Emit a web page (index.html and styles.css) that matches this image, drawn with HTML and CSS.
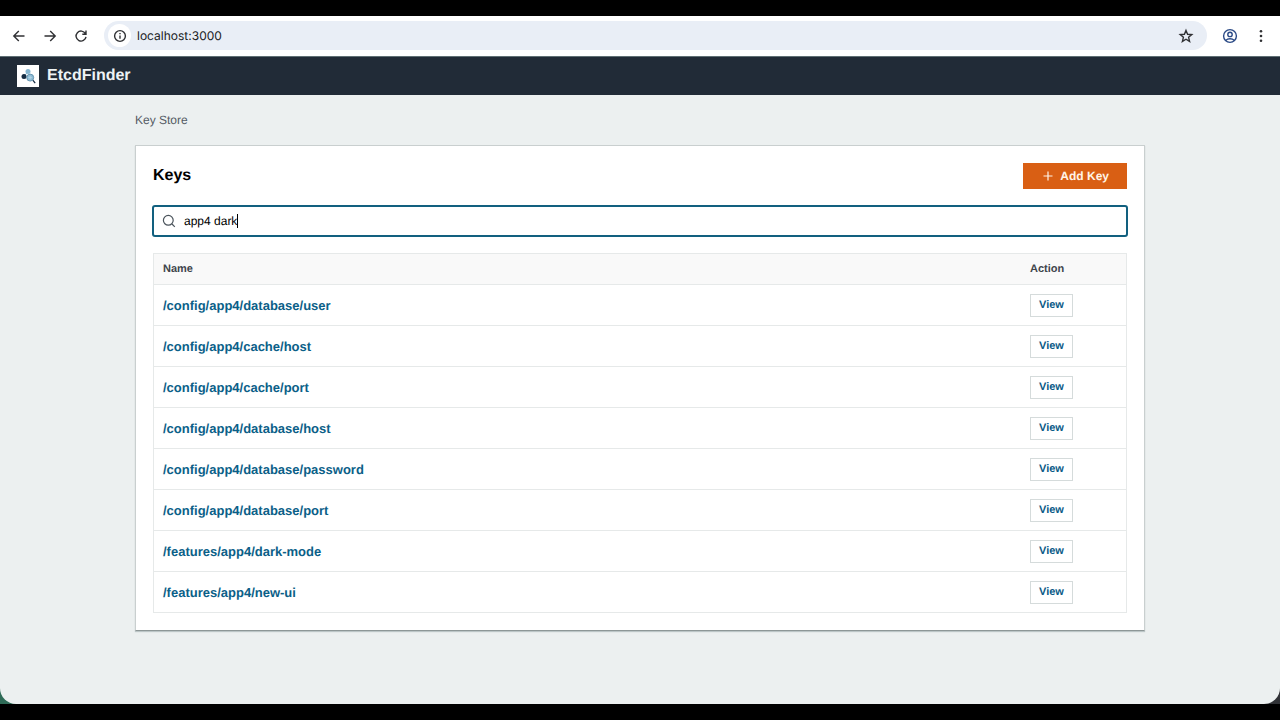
FILE: index.html
```
<!DOCTYPE html>
<html lang="en">
<head>
    <meta charset="UTF-8">
    <meta name="viewport" content="width=device-width, initial-scale=1.0">
    <title>EtcdFinder</title>
    <link rel="stylesheet" href="styles.css">
</head>
<body>

<div class="window">
    <!-- Browser Toolbar -->
    <div class="toolbar">
        <button class="tool-button" aria-label="Back">
            <svg width="16" height="16" viewBox="0 0 16 16"><path d="M13.500 8H3M7.800 3L2.800 8l5 5"/></svg>
        </button>
        <button class="tool-button" aria-label="Forward">
            <svg width="16" height="16" viewBox="0 0 16 16"><path d="M2.500 8H13M8.200 3l5 5-5 5"/></svg>
        </button>
        <button class="tool-button" aria-label="Reload">
            <svg width="16" height="16" viewBox="0 0 16 16"><path d="M12.400 5.600A5 5 0 1 0 13 8.800M13 2.600v3.700H9.300"/></svg>
        </button>
        <div class="address-bar">
            <button class="site-info" aria-label="Site information">
                <svg width="14" height="14" viewBox="0 0 14 14"><circle cx="7" cy="7" r="5.400"/><path d="M7 6.400v3.400M7 4v1.300"/></svg>
            </button>
            <input class="address" type="text" value="localhost:3000" aria-label="Address">
            <button class="tool-button" aria-label="Bookmark">
                <svg width="16" height="16" viewBox="0 0 16 16"><path d="M8 2.400l1.600 3.900 4.200.3-3.200 2.700 1 4.100L8 11.200l-3.600 2.200 1-4.100-3.200-2.700 4.200-.3z"/></svg>
            </button>
        </div>
        <button class="tool-button profile" aria-label="Profile">
            <svg width="16" height="16" viewBox="0 0 16 16"><circle cx="8" cy="8" r="6.400"/><circle cx="8" cy="6.400" r="2.200"/><path d="M3.600 12.400c2.400-2.200 6.400-2.200 8.800 0"/></svg>
        </button>
        <button class="tool-button menu" aria-label="Menu">
            <svg width="16" height="16" viewBox="0 0 16 16"><circle cx="8" cy="3.200" r="1.300"/><circle cx="8" cy="8" r="1.300"/><circle cx="8" cy="12.800" r="1.300"/></svg>
        </button>
    </div>

    <!-- App Header -->
    <header class="header">
        <svg class="logo" width="22" height="22" viewBox="0 0 22 22">
            <rect width="22" height="22" fill="#fff"/>
            <path d="M11 6.500L7 11.500" fill="none" stroke="#8ab4cc"/>
            <circle cx="11" cy="6.500" r="2.500" fill="#85b5cf"/>
            <circle cx="7" cy="11.500" r="2.500" fill="#142b42"/>
            <path d="M15.800 15.200l2.400 2.900" stroke="#142b42" stroke-width="1.300"/>
            <circle cx="13.200" cy="12.600" r="3.500" fill="#8fbdd6" stroke="#5588a6" stroke-width="0.800"/>
            <path d="M11.500 12.600h3.400M13.200 10.900v3.400" stroke="#b9d8e8" stroke-width="0.800"/>
        </svg>
        <span class="brand">EtcdFinder</span>
    </header>

    <!-- Main Content -->
    <main class="content">
        <nav class="breadcrumb"><a href="#">Key Store</a></nav>

        <section class="card">
            <div class="card-header">
                <h1>Keys</h1>
                <button class="add-button">
                    <svg width="10" height="10" viewBox="0 0 10 10"><path d="M5 0.500v9M0.500 5h9"/></svg>
                    Add Key
                </button>
            </div>

            <label class="search">
                <svg width="14" height="14" viewBox="0 0 14 14"><circle cx="6.300" cy="6.300" r="4.900"/><path d="M10 10l2.800 2.800"/></svg>
                <input type="text" value="app4 dark" aria-label="Search keys">
                <span class="caret"></span>
            </label>

            <table class="keys-table">
                <thead>
                    <tr><th>Name</th><th class="action">Action</th></tr>
                </thead>
                <tbody>
                    <tr><td><a href="#">/config/app4/database/user</a></td><td><button class="view-button">View</button></td></tr>
                    <tr><td><a href="#">/config/app4/cache/host</a></td><td><button class="view-button">View</button></td></tr>
                    <tr><td><a href="#">/config/app4/cache/port</a></td><td><button class="view-button">View</button></td></tr>
                    <tr><td><a href="#">/config/app4/database/host</a></td><td><button class="view-button">View</button></td></tr>
                    <tr><td><a href="#">/config/app4/database/password</a></td><td><button class="view-button">View</button></td></tr>
                    <tr><td><a href="#">/config/app4/database/port</a></td><td><button class="view-button">View</button></td></tr>
                    <tr><td><a href="#">/features/app4/dark-mode</a></td><td><button class="view-button">View</button></td></tr>
                    <tr><td><a href="#">/features/app4/new-ui</a></td><td><button class="view-button">View</button></td></tr>
                </tbody>
            </table>
        </section>
    </main>
</div>

</body>
</html>
```
FILE: styles.css
```
* {
    box-sizing: border-box;
}

body {
    font-family: "Liberation Sans", Arial, sans-serif;
    font-size: 12px;
    text-rendering: geometricPrecision;
    margin: 0;
    padding: 16px 0;
    min-height: 100vh;
    background-color: #000;
    display: flex;
    flex-direction: column;
}

button,
input {
    font-family: inherit;
    text-rendering: inherit;
    margin: 0;
    padding: 0;
    border: none;
    background: none;
}

button {
    cursor: pointer;
}

svg {
    display: block;
    flex-shrink: 0;
}

a {
    text-decoration: none;
}

.window {
    flex: 1;
    display: flex;
    flex-direction: column;
    background: linear-gradient(90deg, #2f6b57 50%, #303236 50%);
}

/* Browser Toolbar */
.toolbar {
    display: flex;
    align-items: center;
    height: 40px;
    padding: 0 11px 1px;
    gap: 15px;
    background-color: #fff;
}

.tool-button svg,
.site-info svg {
    fill: none;
    stroke: #303134;
    stroke-width: 1.4;
}

.address-bar {
    flex: 1;
    display: flex;
    align-items: center;
    height: 29px;
    padding: 0 13px 0 4px;
    gap: 6px;
    background-color: #e9eef6;
    border-radius: 15px;
}

.site-info {
    display: flex;
    align-items: center;
    justify-content: center;
    width: 23px;
    height: 23px;
    background-color: #fff;
    border-radius: 50%;
}

.address {
    flex: 1;
    font-family: Inter, sans-serif;
    font-size: 12px;
    color: #202124;
}

.profile svg {
    stroke: #2b4a86;
}

.menu svg {
    fill: #303134;
    stroke: none;
}

/* App Header */
.header {
    display: flex;
    align-items: center;
    height: 39px;
    padding: 0 17px 1px;
    gap: 8px;
    background-color: #212b37;
    border-top: 1px solid #5f6f74;
}

.brand {
    font-size: 16px;
    font-weight: bold;
    color: #eef3f5;
}

/* Main Content */
.content {
    flex: 1;
    padding: 16px 135px;
    background-color: #ecf0f0;
    border-radius: 0 0 16px 16px;
}

.breadcrumb {
    line-height: 18px;
    margin-bottom: 16px;
}

.breadcrumb a {
    color: #545b64;
}

.card {
    padding: 17px;
    background-color: #fff;
    border: 1px solid #c9cfcf;
    border-bottom-color: #8d9797;
    box-shadow: 0 1px 1px rgba(0, 28, 36, 0.2);
}

.card-header {
    display: flex;
    align-items: center;
    justify-content: space-between;
}

.card-header h1 {
    margin: 0;
    font-size: 16px;
    color: #000;
}

.add-button {
    display: flex;
    align-items: center;
    height: 26px;
    padding: 0 18px 0 20px;
    gap: 7px;
    font-size: 12px;
    font-weight: bold;
    color: #fff3e6;
    background-color: #d95f14;
}

.add-button svg {
    fill: none;
    stroke: #fff3e6;
    stroke-width: 1.2;
}

/* Search */
.search {
    display: flex;
    align-items: center;
    height: 32px;
    margin: 16px -1px;
    padding: 0 8px;
    border: 2px solid #12607f;
    border-radius: 3px;
}

.search svg {
    margin-right: 8px;
    fill: none;
    stroke: #4b545c;
    stroke-width: 1.2;
}

.search input {
    field-sizing: content;
    font-size: 12px;
    color: #000;
    outline: none;
}

.caret {
    width: 1px;
    height: 14px;
    background-color: #000;
}

/* Keys Table */
.keys-table {
    width: 100%;
    table-layout: fixed;
    border: 1px solid #e6e9e9;
    border-bottom: none;
    border-spacing: 0;
}

.keys-table th,
.keys-table td {
    padding: 0 9px;
    text-align: left;
    border-bottom: 1px solid #e6e9e9;
}

.keys-table th {
    height: 31px;
    font-size: 11px;
    color: #3f454c;
    background-color: #f9f9f9;
}

.keys-table .action {
    width: 105px;
}

.keys-table td {
    height: 41px;
}

.keys-table td a {
    font-size: 13px;
    font-weight: bold;
    color: #0b6088;
}

.view-button {
    display: block;
    height: 23px;
    padding: 0 8px;
    font-size: 11px;
    font-weight: bold;
    color: #0b5a87;
    border: 1px solid #d5dbdb;
}
```
